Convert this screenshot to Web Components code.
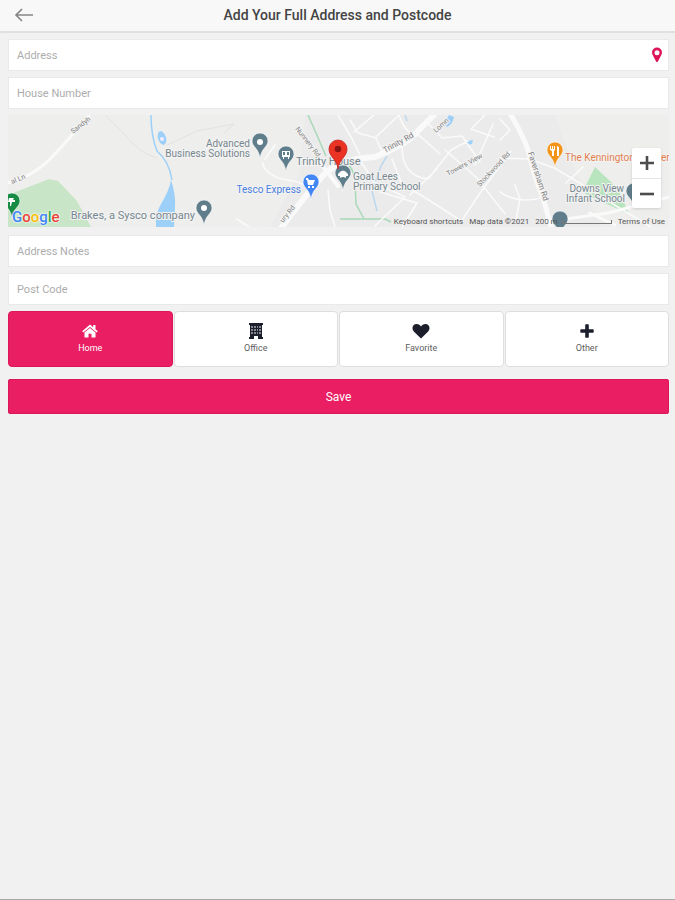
<!DOCTYPE html>
<html lang="en">
<head>
<meta charset="utf-8">
<title>Add Your Full Address and Postcode</title>
<style>
html, body { margin: 0; }
body { background: #f1f1f1; font-family: Roboto, "Liberation Sans", sans-serif; color: #3c3c3c; }
</style>
</head>
<body>
<address-page></address-page>
<script>
const define = (name, html, setup) => customElements.define(name, class extends HTMLElement {
  constructor() {
    super();
    const t = document.createElement('template');
    t.innerHTML = '<style>*{box-sizing:border-box}button{font:inherit;cursor:pointer}</style>' + html;
    this.attachShadow({ mode: 'open' }).append(t.content.cloneNode(true));
  }
  connectedCallback() { if (setup) setup(this, this.shadowRoot); }
});

define('page-header', `
<style>
:host { display: grid; grid-template-columns: 48px 1fr 48px; align-items: start; height: 33px; background: #f8f8f8; border-bottom: 2px solid #e0e0e0; }
button { display: flex; align-items: center; padding: 0 0 0 14px; height: 30px; border: 0; background: none; }
svg { width: 20px; height: 14px; fill: none; stroke: #858585; stroke-width: 1.6; }
h1 { margin: 0; text-align: center; font-size: 14px; line-height: 30px; font-weight: 500; color: #444; }
</style>
<button type="button" aria-label="Back"><svg viewBox="0 0 20 14"><path d="M19 7H2M8 1 2 7l6 6"/></svg></button>
<h1><slot></slot></h1>`);

define('text-field', `
<style>
:host { display: flex; align-items: center; height: 32px; background: #fff; border: 1px solid #e9e9e9; }
input { flex: 1; min-width: 0; height: 30px; padding: 0 8px; border: 0; outline: 0; background: none; font: 11px/16px Roboto, "Liberation Sans", sans-serif; color: #333; }
input::placeholder { color: #adadad; opacity: 1; }
</style>
<input type="text"><slot></slot>`, (host, root) => {
  const input = root.querySelector('input');
  input.placeholder = host.getAttribute('label');
  input.setAttribute('aria-label', host.getAttribute('label'));
});

define('locate-button', `
<style>
:host { display: flex; }
button { display: flex; padding: 0 5px; border: 0; background: none; }
svg { width: 12px; height: 16px; fill: #de1458; }
</style>
<button type="button" aria-label="Use my location"><svg viewBox="0 0 12 16"><path fill-rule="evenodd" d="M6 .6a5 5 0 0 1 5 5c0 1-.3 1.700-.7 2.500L6.900 14.500q-.9 1.200-1.800 0L1.700 8.100C1.300 7.300 1 6.600 1 5.600a5 5 0 0 1 5-5ZM6 3.200a2.500 2.500 0 1 0 0 5 2.500 2.500 0 0 0 0-5Z"/></svg></button>`);

define('map-controls', `
<style>
:host { display: flex; flex-direction: column; width: 29px; background: #fff; border-radius: 2px; box-shadow: 0 1px 3px #0002; }
button { display: grid; place-items: center; height: 30px; padding: 0; border: 0; background: none; }
button + button { border-top: 1px solid #e6e6e6; }
svg { width: 14px; height: 14px; fill: none; stroke: #4c4c4c; stroke-width: 2.600; }
</style>
<button type="button" aria-label="Zoom in"><svg viewBox="0 0 14 14"><path d="M0 7h14M7 0v14"/></svg></button>
<button type="button" aria-label="Zoom out"><svg viewBox="0 0 14 14"><path d="M0 7h14"/></svg></button>`);

/* The drawing's user space starts at (8, 115) and is 661 x 112 units. */
define('address-map', `
<style>
:host { display: block; position: relative; height: 112px; margin-bottom: 2px; overflow: hidden; background: #eeeeed; }
.map { display: block; width: 100%; height: 100%; }
text { font-family: Roboto, "Liberation Sans", sans-serif; font-size: 10px; fill: #76868d; paint-order: stroke; stroke: #f3f3f3; stroke-width: 2px; }
.road { font-size: 7px; fill: #808080; }
map-controls { position: absolute; right: 8px; top: 33px; }
.logo { position: absolute; left: 4px; bottom: 1px; font: 500 15px/18px Roboto, "Liberation Sans", sans-serif; text-decoration: none; text-shadow: 0 0 2px #fff, 0 0 2px #fff; }
.b { color: #4285f4 } .r { color: #ea4335 } .y { color: #fbbc05 } .g { color: #34a853 }
.legal { position: absolute; right: 4px; bottom: 0; display: flex; align-items: center; gap: 6px; height: 11px; font-size: 8px; line-height: 11px; color: #555; white-space: nowrap; }
.legal button { padding: 0; border: 0; background: none; color: inherit; }
.legal a { color: inherit; text-decoration: none; }
.scale { display: flex; align-items: center; gap: 4px; }
.scale i { width: 50px; height: 4px; border: 1px solid #777; border-top: 0; }
</style>
<svg class="map" viewBox="8 115 661 112" preserveAspectRatio="xMidYMid slice" role="img" aria-label="Map">
  <defs>
    <path id="pin" d="M0 10C-1-1-8-2-8-8a8 8 0 0 1 16 0C8-2 1-1 0 10Z"/>
  </defs>
  <rect x="-600" y="0" width="1900" height="400" fill="#eeeeed"/>
  <path d="M305 115h250l22 60 25 52H270l30-55Z" fill="#ebebeb"/>
  <path d="M8 195 49 179l9 2 19 20 14 26H8Z" fill="#c8e6c7"/>
  <path d="m595 167 16 15 9 11 9 21-42-19-4-4Z" fill="#b9e5be"/>
  <g fill="#9cd0f8">
    <path d="M171 180q5 15 4 27l-1 20h-18q-1-13 5-23 8-13 10-24Z"/>
    <path d="m449 115 5 2q-2 8-7 10l-3-3Zm18 26 6-1-1 4-5 1Z"/>
    <ellipse cx="162" cy="138" rx="4" ry="7" transform="rotate(-18 162 138)"/>
  </g>
  <circle cx="162" cy="139" r="2" fill="#eef"/>
  <path d="M151 115q0 21 6 36 12 10 15 29" fill="none" stroke="#9cd0f8" stroke-width="1.500"/>
  <path d="m405 115 2 6M387 156l-6 10-9 25 5 20" fill="none" stroke="#bcd8ee" stroke-width="1.500"/>
  <g fill="none" stroke="#e2e2e2" stroke-width="1">
    <path d="m105 115 18 18q17 21 34 25M167 145l30-14 37-7-10 9"/>
  </g>
  <g fill="none" stroke="#a9d9b8" stroke-width="1.500">
    <path d="m308 115 8 18 10 23M349 165q6 8 6 17l1 22 8 15M340 219h45l6 3"/>
  </g>
  <g fill="none" stroke="#fafafa" stroke-linecap="round" stroke-linejoin="round">
    <path stroke-width="3" d="M8 183q28-8 46-28l20-22 15-17"/>
    <path stroke-width="6" d="M276 235q28-38 44-56 15-20 55-22 24-10 36-19l23-23"/>
    <path stroke-width="5" d="M511 115q17 29 19 44 6 22 14 42l7 26"/>
    <path stroke-width="1.600" d="m328 190 2 20 5 17M237 219l12 8M263 163q0 8 15 15l20 4 12 6M275 145l-10 14M338 115l13 22 9 18M350 120l8 13 18 5 7 16M354 132l20-17M376 137l23-22M399 115q6 20 21 21l20 18M425 120l17 18 20-2 18 26M402 147q0 29 26 32l23-29 17-9M392 159l10 25 22 13 36 23M380 192l37 11-15 24M360 160l14 22 31 15-30 29M410 195l27-26M445 150l31 27 29 37M462 220l18-27 31-42M485 115l-14 14 23 8M493 124l-18 41M500 192q19 13 44 5M530 159l24 9q20 11 54 33l43 26M566 183l17-16M500 158l30 1M500 140l10-10-10-11M515 185l5 14-4 21"/>
    <path stroke-width="3" d="m545 222 63-9 61-16M590 213l25 12"/>
    <path stroke-width="4" d="m318 160 20 26"/>
  </g>
  <text class="road" transform="translate(73 134) rotate(-38)">Sandyh</text>
  <text class="road" transform="translate(12 184) rotate(-22)">al Ln</text>
  <text class="road" transform="translate(283 223) rotate(-51)">ury Rd</text>
  <text class="road" transform="translate(295 129) rotate(52)">Nunnery Rd</text>
  <text class="road" transform="translate(385 153) rotate(-29)" style="font-size:8px">Trinity Rd</text>
  <text class="road" transform="translate(436 133) rotate(-42)">Lomn</text>
  <text class="road" transform="translate(448 176) rotate(-28)">Towers View</text>
  <text class="road" transform="translate(480 187) rotate(-47)">Stockwood Rd</text>
  <text class="road" transform="translate(528 153) rotate(72)" style="font-size:8px">Faversham Rd</text>
  <text x="250" y="147" text-anchor="end">Advanced</text>
  <text x="250" y="157" text-anchor="end">Business Solutions</text>
  <text x="296" y="165" style="font-size:11px">Trinity House</text>
  <text x="353" y="180">Goat Lees</text>
  <text x="353" y="190">Primary School</text>
  <text x="301" y="193" text-anchor="end" style="fill:#4a80de">Tesco Express</text>
  <text x="195" y="219" text-anchor="end" style="font-size:11px">Brakes, a Sysco company</text>
  <text x="565" y="161" style="fill:#e2804f">The Kennington</text>
  <text x="661" y="161" style="fill:#e2804f">er</text>
  <text x="624" y="192" text-anchor="end">Downs View</text>
  <text x="625" y="202" text-anchor="end">Infant School</text>
  <g fill="#607d8b" stroke="#fff" stroke-width=".6">
    <use href="#pin" x="260" y="149"/>
    <use href="#pin" x="286" y="162"/>
    <use href="#pin" x="343" y="181"/>
    <use href="#pin" x="204" y="216"/>
    <use href="#pin" x="634" y="199"/>
    <use href="#pin" x="560" y="227"/>
    <use href="#pin" x="311" y="190" fill="#4285f4"/>
    <use href="#pin" x="555" y="158" fill="#f29419"/>
    <use href="#pin" x="12" y="209" fill="#168b43"/>
  </g>
  <g fill="#fff">
    <circle cx="260" cy="142" r="3"/><circle cx="204" cy="208" r="3"/>
    <path fill-rule="evenodd" d="M282 151h8v6h-1v2h-1v-2h-4v2h-1v-2h-1Zm1 1v3h2v-3Zm4 0v3h2v-3Z"/>
    <path d="M338 174q5-7 10 0v2h-2v2q-3-2-6 0v-2h-2Z"/>
    <path d="M306 178h2l1 2h6l-2 5h-5l-1-5h-1Zm2 8h2v2h-2Zm4 0h2v2h-2Z"/>
    <path d="M550 146h1v3h1v-3h1v3h1v-3h1v4l-1 1v5h-2v-5l-2-1Zm7 0 2 1v9h-2Z"/>
    <path d="M9 198h5l-1 2h2v2h-3l-1 4h-1v-4H8Z"/>
  </g>
  <path d="M338 169c-1-10-9-12-9-20a9 9 0 0 1 18 0c0 8-8 10-9 20Z" fill="#ea3323" stroke="#c5221f" stroke-width=".8"/>
  <circle cx="338" cy="149" r="3.300" fill="#8b1412"/>
</svg>
<a class="logo" href="#" aria-label="Google"><span class="b">G</span><span class="r">o</span><span class="y">o</span><span class="b">g</span><span class="g">l</span><span class="r">e</span></a>
<div class="legal"><button type="button">Keyboard shortcuts</button><span>Map data ©2021</span><span class="scale">200 m <i></i></span><a href="#">Terms of Use</a></div>
<map-controls></map-controls>`);

define('type-option', `
<style>
:host { display: block; }
button { display: flex; flex-direction: column; align-items: center; gap: 2px; width: 100%; height: 56px; padding: 10px 0 0; border: 1px solid #dedede; border-radius: 4px; background: #fff; color: #606060; }
button[aria-pressed="true"] { background: #e91e63; border-color: #dd1659; color: #fff; --ink: #fff; }
span { font-size: 9px; line-height: 12px; }
::slotted(svg) { display: block; width: 18px; height: 18px; fill: var(--ink, #1c1e2c); }
</style>
<button type="button"><slot></slot><span></span></button>`, (host, root) => {
  root.querySelector('span').textContent = host.getAttribute('label');
  root.querySelector('button').setAttribute('aria-pressed', host.hasAttribute('selected'));
});

define('type-picker', `
<style>
:host { display: grid; grid-template-columns: repeat(4, 1fr); gap: 1px; }
</style>
<type-option label="Home" selected><svg viewBox="0 0 18 18"><path d="M9 2.500 1.200 9.300l1.100 1.300L9 4.900l6.700 5.700 1.100-1.300-2.300-2V3h-2.300v2.300Z"/><path d="M9 5.900 3.500 10.500V15.600h4v-3.800h3v3.800h4v-5.100Z"/></svg></type-option>
<type-option label="Office"><svg viewBox="0 0 18 18"><path d="M2 1h14v2H2Zm1 2h12v12h1v2h-5v-3H7v3H2v-2h1Z"/><path fill="#85868f" d="M4 4h2v2H4Zm3 0h2v2H7Zm3 0h1v2h-1Zm2 0h2v2h-2ZM4 7h2v2H4Zm3 0h2v2H7Zm3 0h1v2h-1Zm2 0h2v2h-2ZM4 10h2v2H4Zm3 0h2v2H7Zm3 0h1v2h-1Zm2 0h2v2h-2Z"/></svg></type-option>
<type-option label="Favorite"><svg viewBox="0 0 18 18"><path d="M9 16.500 1.800 9.400C-.8 6.600.6 2 4.600 2 6.700 2 8 3.200 9 4.400 10 3.200 11.300 2 13.400 2c4 0 5.400 4.600 2.800 7.400Z"/></svg></type-option>
<type-option label="Other"><svg viewBox="0 0 18 18"><path d="M7.200 3q0-.7.700-.7h2.200q.7 0 .7.700v4.200H15q.7 0 .7.700v2.200q0 .7-.7.700h-4.200V15q0 .7-.7.700H7.900q-.7 0-.7-.7v-4.200H3q-.7 0-.7-.7V7.900q0-.7.700-.7h4.200Z"/></svg></type-option>`);

define('save-button', `
<style>
:host { display: block; margin-top: 6px; }
button { display: block; width: 100%; height: 35px; padding: 0; border: 1px solid #dd1659; border-radius: 2px; background: #e91e63; color: #fff; font-size: 12px; line-height: 16px; }
</style>
<button type="submit"><slot></slot></button>`);

define('address-page', `
<style>
:host { display: flex; flex-direction: column; min-height: 100vh; border-bottom: 1px solid #a9a9a9; box-sizing: border-box; }
form { display: flex; flex-direction: column; gap: 6px; padding: 6px 6px 6px 8px; }
</style>
<page-header>Add Your Full Address and Postcode</page-header>
<form>
  <text-field label="Address"><locate-button></locate-button></text-field>
  <text-field label="House Number"></text-field>
  <address-map></address-map>
  <text-field label="Address Notes"></text-field>
  <text-field label="Post Code"></text-field>
  <type-picker></type-picker>
  <save-button>Save</save-button>
</form>`);
</script>
</body>
</html>
